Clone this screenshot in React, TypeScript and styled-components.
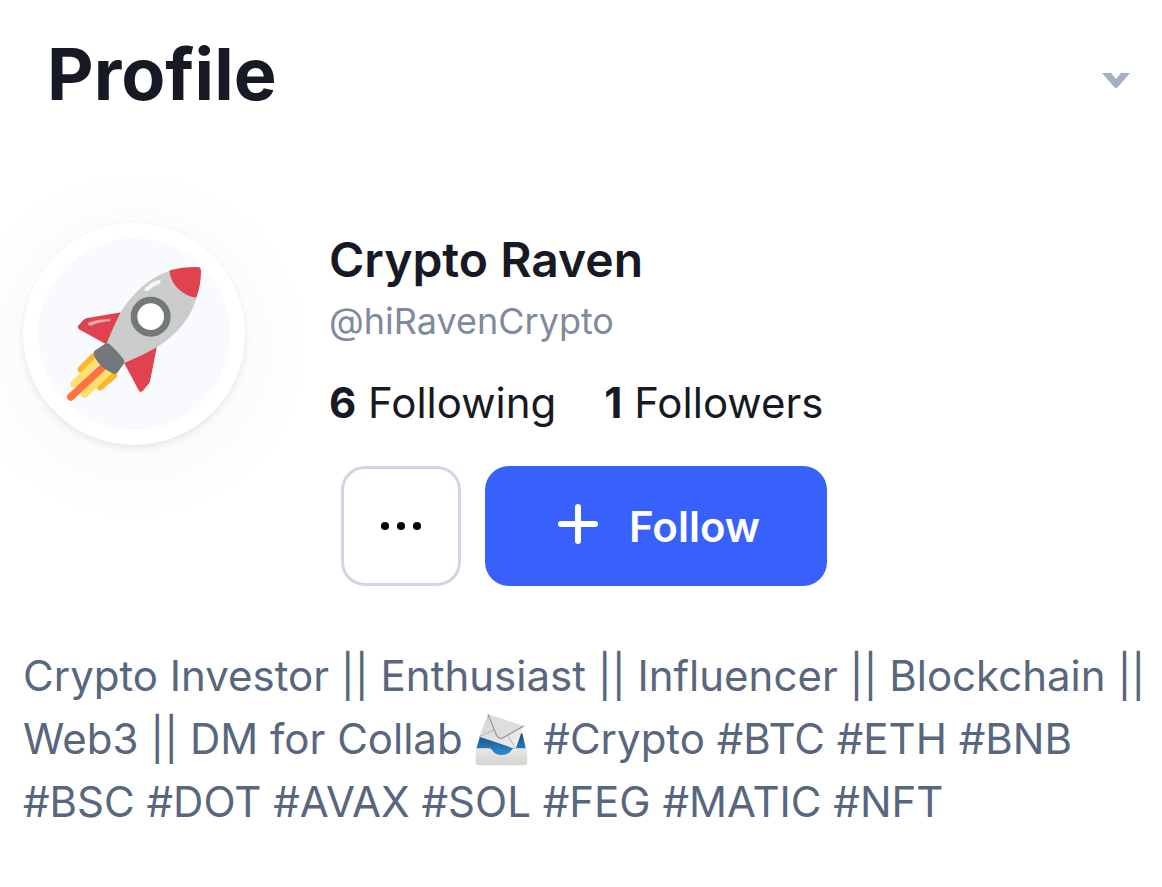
import React from "react";
import styled, { createGlobalStyle } from "styled-components";

const GlobalStyle = createGlobalStyle`
  *, *::before, *::after {
    box-sizing: border-box;
  }
  body {
    margin: 0;
    background: #ffffff;
    color: #171924;
    font-family: Inter, "Liberation Sans", sans-serif;
    font-optical-sizing: none;
  }
`;

const Page = styled.main`
  padding: 24px 12px 48px 23px;
`;

const Header = styled.header`
  display: flex;
  align-items: center;
  justify-content: space-between;
  padding: 0 12px 0 24px;
`;

const Title = styled.h1`
  margin: 0;
  font-size: 72px;
  font-weight: 700;
  line-height: 100px;
`;

const CollapseButton = styled.button`
  display: flex;
  align-items: center;
  justify-content: center;
  padding: 22px 8px 8px;
  border: 0;
  background: none;
  cursor: pointer;
`;

const Summary = styled.section`
  display: flex;
  align-items: flex-start;
  gap: 84px;
  margin-top: 99px;
`;

const Avatar = styled.div`
  flex: none;
  width: 222px;
  height: 222px;
  padding: 15px;
  border-radius: 50%;
  background: #ffffff;
  box-shadow: 0 12px 96px rgba(30, 60, 60, 0.05), 0 3px 6px rgba(88, 102, 126, 0.12);
`;

const AvatarArt = styled.svg`
  display: block;
  width: 100%;
  height: 100%;
  border-radius: 50%;
  background: #f8fafd;
`;

const Info = styled.div`
  min-width: 0;
`;

const Name = styled.h2`
  margin: 0;
  font-size: 48px;
  font-weight: 600;
  line-height: 74px;
`;

const Handle = styled.p`
  margin: 0;
  color: #808a9d;
  font-size: 36px;
  line-height: 48px;
`;

const Stats = styled.div`
  display: flex;
  gap: 48px;
  margin-top: 27px;
  font-size: 42px;
  line-height: 62px;
`;

const Stat = styled.span`
  white-space: nowrap;

  strong {
    font-weight: 700;
  }
`;

const Actions = styled.div`
  display: flex;
  gap: 24px;
  margin: 32px 0 0 12px;
`;

const ActionButton = styled.button<{ $primary?: boolean }>`
  display: flex;
  align-items: center;
  justify-content: center;
  gap: 31px;
  min-width: 120px;
  height: 120px;
  padding: ${(p) => (p.$primary ? "0 67px 0 73px" : "0")};
  border: ${(p) => (p.$primary ? "0" : "3px solid #cfd6e4")};
  border-radius: 24px;
  background: ${(p) => (p.$primary ? "#3861fb" : "#ffffff")};
  color: ${(p) => (p.$primary ? "#ffffff" : "#000000")};
  font: inherit;
  font-size: 42px;
  font-weight: 600;
  cursor: pointer;
`;

const Bio = styled.p`
  margin: 58px 0 0;
  color: #58667e;
  font-size: 42px;
  line-height: 63px;
`;

const InlineEmoji = styled.svg`
  width: 53px;
  height: 52px;
  margin: 0 3px 0 1px;
  vertical-align: -12px;
`;

const Rocket = () => (
  <AvatarArt viewBox="-36 -36 576 576" role="img" aria-label="Rocket">
    <g strokeLinecap="round" fill="none">
      <path d="M130 322 L94 358" stroke="#fdb52b" strokeWidth="22" />
      <path d="M145 330 L72 402" stroke="#ffdf70" strokeWidth="22" />
      <path d="M190 376 L150 410" stroke="#fdb52b" strokeWidth="22" />
      <path d="M174 364 L104 432" stroke="#ffdf70" strokeWidth="24" />
      <path d="M156 354 L62 441" stroke="#ff713d" strokeWidth="22" />
    </g>
    <path d="M214 187 L112 204 Q105 205 100 210 L84 228 Q81 234 87 238 L167 282 L188 270 Z" fill="#e0434f" />
    <path d="M115 218 Q144 207 181 208 Q184 213 176 214 Q143 217 124 227 Q109 226 115 218 Z" fill="#f4a9ae" />
    <path d="M222 338 L266 421 Q271 429 278 423 L296 401 Q300 396 301 389 L321 288 Z" fill="#e0434f" />
    <path
      d="M359 62 C302 80 248 126 212 187 Q190 230 169 282 L225 338 Q275 318 321 292 C380 254 423 205 440 142 Z"
      fill="#cbcccc"
    />
    <path d="M359 61 Q399 50 444 51 Q452 52 453 62 Q453 105 439 143 C402 141 359 103 359 61 Z" fill="#e0434f" />
    <path d="M284 116 Q302 95 328 90 Q336 94 329 101 Q308 109 294 123 Q282 126 284 116 Z" fill="#f5f6f6" />
    <circle cx="302" cy="200" r="50" fill="#ffffff" stroke="#74787b" strokeWidth="20" />
    <path
      d="M164 282 Q170 277 178 282 C195 298 203 305 220 327 Q226 335 221 342 L204 366 Q197 375 187 370 C160 356 145 343 133 319 Q128 309 134 302 Z"
      fill="#74787b"
    />
  </AvatarArt>
);

const Envelope = () => (
  <InlineEmoji viewBox="45 42 159 156" role="img" aria-label="Incoming envelope">
    <defs>
      <linearGradient id="tray-inside" x1="0" y1="0" x2="0" y2="1">
        <stop offset="0" stopColor="#174e7c" />
        <stop offset="1" stopColor="#2c91df" />
      </linearGradient>
      <linearGradient id="tray-front" x1="0" y1="0" x2="0" y2="1">
        <stop offset="0" stopColor="#e9e8e4" />
        <stop offset="1" stopColor="#d6d4d0" />
      </linearGradient>
      <linearGradient id="paper" x1="0" y1="0" x2="1" y2="1">
        <stop offset="0" stopColor="#d2d2d3" />
        <stop offset="1" stopColor="#f1f1f1" />
      </linearGradient>
    </defs>
    <path d="M61 106 L187 100 L198 148 L172 170 L80 170 L49 146 Z" fill="url(#tray-inside)" />
    <path d="M84 43 L191 78 L167 147 L58 110 Z" fill="url(#paper)" />
    <path d="M58 110 L101 90 M142 104 L167 147" fill="none" stroke="#b5b5b6" strokeWidth="3" />
    <path d="M84 43 L110 107 Q118 120 131 112 L191 78" fill="#dededf" stroke="#9c9c9d" strokeWidth="4" />
    <path
      d="M48 145 H86 Q94 145 98 152 C106 169 144 169 153 152 Q157 145 165 145 H201 L202 186 Q202 196 192 196 H57 Q47 196 47 186 Z"
      fill="url(#tray-front)"
    />
  </InlineEmoji>
);

export default function App() {
  return (
    <>
      <GlobalStyle />
      <Page>
        <Header>
          <Title>Profile</Title>
          <CollapseButton aria-label="Collapse profile">
            <svg width="28" height="16" viewBox="0 0 28 16" aria-hidden="true">
              <path d="M0 0 H9 L14 6 L19 0 H28 L16 14 Q14 16 12 14 Z" fill="#a6b0c3" />
            </svg>
          </CollapseButton>
        </Header>
        <Summary>
          <Avatar>
            <Rocket />
          </Avatar>
          <Info>
            <Name>Crypto Raven</Name>
            <Handle>@hiRavenCrypto</Handle>
            <Stats>
              <Stat>
                <strong>6</strong> Following
              </Stat>
              <Stat>
                <strong>1</strong> Followers
              </Stat>
            </Stats>
            <Actions>
              <ActionButton aria-label="More options">
                <svg width="40" height="8" viewBox="0 0 40 8" fill="currentColor" aria-hidden="true">
                  <circle cx="4" cy="4" r="4" />
                  <circle cx="20" cy="4" r="4" />
                  <circle cx="36" cy="4" r="4" />
                </svg>
              </ActionButton>
              <ActionButton $primary>
                <svg width="40" height="44" viewBox="0 0 40 44" aria-hidden="true">
                  <path d="M20 3 V37 M3 20 H37" stroke="currentColor" strokeWidth="6" strokeLinecap="round" />
                </svg>
                Follow
              </ActionButton>
            </Actions>
          </Info>
        </Summary>
        <Bio>
          Crypto Investor || Enthusiast || Influencer || Blockchain || Web3 || DM for Collab <Envelope /> #Crypto #BTC
          #ETH #BNB #BSC #DOT #AVAX #SOL #FEG #MATIC #NFT
        </Bio>
      </Page>
    </>
  );
}
